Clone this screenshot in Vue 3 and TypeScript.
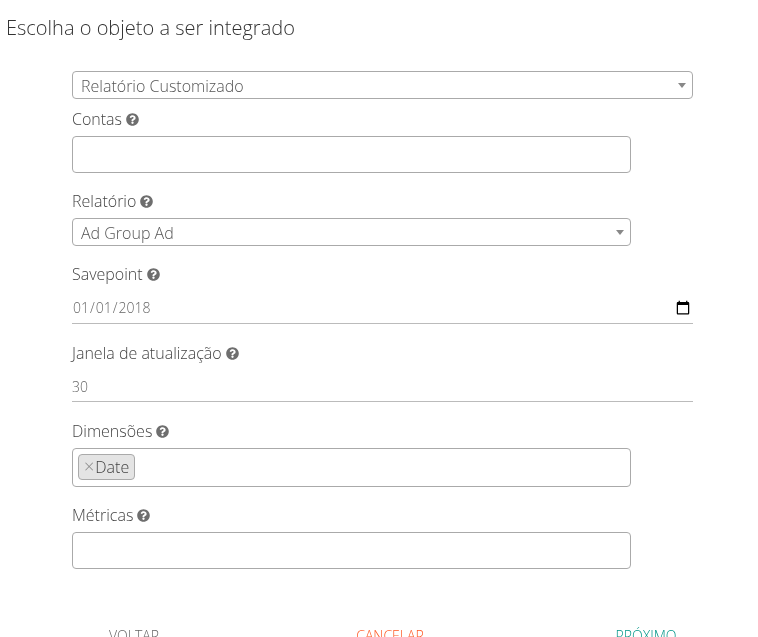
<script setup lang="ts">
const helpPath =
  'M504 256c0 136.997-111.043 248-248 248S8 392.997 8 256C8 119.083 119.043 8 256 8s248 111.083 248 248zM262.655 90c-54.497 0-89.255 22.957-116.549 63.758-3.536 5.286-2.353 12.415 2.715 16.258l34.699 26.31c5.205 3.947 12.621 3.008 16.665-2.122 17.864-22.658 30.113-35.797 57.303-35.797 20.429 0 45.698 13.148 45.698 32.958 0 14.976-12.363 22.667-32.534 33.976C247.128 238.528 216 254.941 216 296v4c0 6.627 5.373 12 12 12h56c6.627 0 12-5.373 12-12v-1.333c0-28.462 83.186-29.647 83.186-106.667 0-58.002-60.165-102-116.531-102zM256 338c-25.365 0-46 20.635-46 46 0 25.364 20.635 46 46 46s46-20.636 46-46c0-25.365-20.635-46-46-46z'
</script>

<template>
  <div class="page">
    <h1 class="title">Escolha o objeto a ser integrado</h1>
    <form class="form">
      <div class="select select-top">
        <span>Relatório Customizado</span>
        <i class="caret"></i>
      </div>

      <label class="label l-contas">Contas
        <svg class="help" viewBox="0 0 512 512"><path :d="helpPath" /></svg>
      </label>
      <div class="box narrow h37"></div>

      <label class="label l-rel">Relatório
        <svg class="help" viewBox="0 0 512 512"><path :d="helpPath" /></svg>
      </label>
      <div class="select narrow">
        <span>Ad Group Ad</span>
        <i class="caret"></i>
      </div>

      <label class="label l-save">Savepoint
        <svg class="help" viewBox="0 0 512 512"><path :d="helpPath" /></svg>
      </label>
      <input class="line date" type="date" value="2018-01-01" />

      <label class="label l-jan">Janela de atualização
        <svg class="help" viewBox="0 0 512 512"><path :d="helpPath" /></svg>
      </label>
      <input class="line num" type="text" value="30" />

      <label class="label l-dim">Dimensões
        <svg class="help" viewBox="0 0 512 512"><path :d="helpPath" /></svg>
      </label>
      <div class="box narrow tags">
        <span class="tag"><span class="x">×</span>Date</span>
      </div>

      <label class="label l-met">Métricas
        <svg class="help" viewBox="0 0 512 512"><path :d="helpPath" /></svg>
      </label>
      <div class="box narrow h37"></div>
    </form>

    <div class="actions">
      <a class="act back">VOLTAR</a>
      <a class="act cancel">CANCELAR</a>
      <a class="act next">PRÓXIMO</a>
    </div>
  </div>
</template>

<style>
html, body { margin: 0; overflow: hidden; background: #fff; }
</style>

<style scoped>
.page {
  height: 637px;
  overflow: hidden;
  box-sizing: border-box;
  font-family: "Open Sans", sans-serif;
  font-weight: 300;
  color: #444;
  will-change: transform;
}
.title {
  margin: 0;
  padding: 14px 0 0 6px;
  font-size: 20px;
  line-height: 28px;
  font-weight: 300;
  color: #333;
}
.form {
  display: flex;
  flex-direction: column;
  align-items: flex-start;
  width: 621px;
  margin: 29px 0 0 72px;
}
.label {
  display: flex;
  align-items: center;
  gap: 4px;
  height: 20px;
  font-size: 16px;
  line-height: 20px;
  color: #444;
}
.l-contas { margin-top: 10px; margin-bottom: 7px; }
.l-rel { margin-top: 18px; margin-bottom: 7px; }
.l-save { margin-top: 18px; margin-bottom: 8px; }
.l-jan { margin-top: 19px; margin-bottom: 8px; }
.l-dim { margin-top: 19px; margin-bottom: 7px; }
.l-met { margin-top: 18px; margin-bottom: 7px; }
.help { width: 13px; height: 13px; fill: #6e6e6e; flex: none; margin-top: 1px; }
.select, .box {
  box-sizing: border-box;
  border: 1px solid #aaa;
  border-radius: 4px;
  background: #fff;
}
.select {
  position: relative;
  width: 621px;
  height: 28px;
  padding-left: 8px;
  font-size: 16px;
  line-height: 28px;
  color: #555;
}
.narrow { width: 559px; }
.caret {
  position: absolute;
  right: 6px;
  top: 11px;
  width: 0;
  height: 0;
  border-left: 4px solid transparent;
  border-right: 4px solid transparent;
  border-top: 5px solid #888;
}
.h37 { height: 37px; }
.line {
  display: block;
  box-sizing: border-box;
  width: 621px;
  height: 31px;
  padding: 0;
  border: 0;
  border-bottom: 1px solid #bbb;
  outline: none;
  background: transparent;
  font-family: inherit;
  font-size: 14px;
  font-weight: 300;
  color: #666;
}
.date { height: 32px; }
.date::-webkit-calendar-picker-indicator {
  width: 16px;
  height: 16px;
  padding: 0;
  margin: 0 2px 0 0;
}
.tags {
  height: 39px;
  padding: 5px;
  display: flex;
  align-items: flex-start;
}
.tag {
  box-sizing: border-box;
  height: 26px;
  padding: 0 5px;
  border: 1px solid #aaa;
  border-radius: 4px;
  background: #e4e4e4;
  font-size: 16px;
  line-height: 24px;
  color: #444;
}
.x { color: #888; margin-right: 1px; font-size: 18px; line-height: 20px; }
.actions {
  display: grid;
  grid-template-columns: repeat(3, 256px);
  margin: 57px 0 0 6px;
}
.act {
  display: block;
  text-align: center;
  font-size: 14px;
  line-height: 20px;
}
.back { color: #666; }
.cancel { color: #ff5722; }
.next { color: #009688; }
</style>
